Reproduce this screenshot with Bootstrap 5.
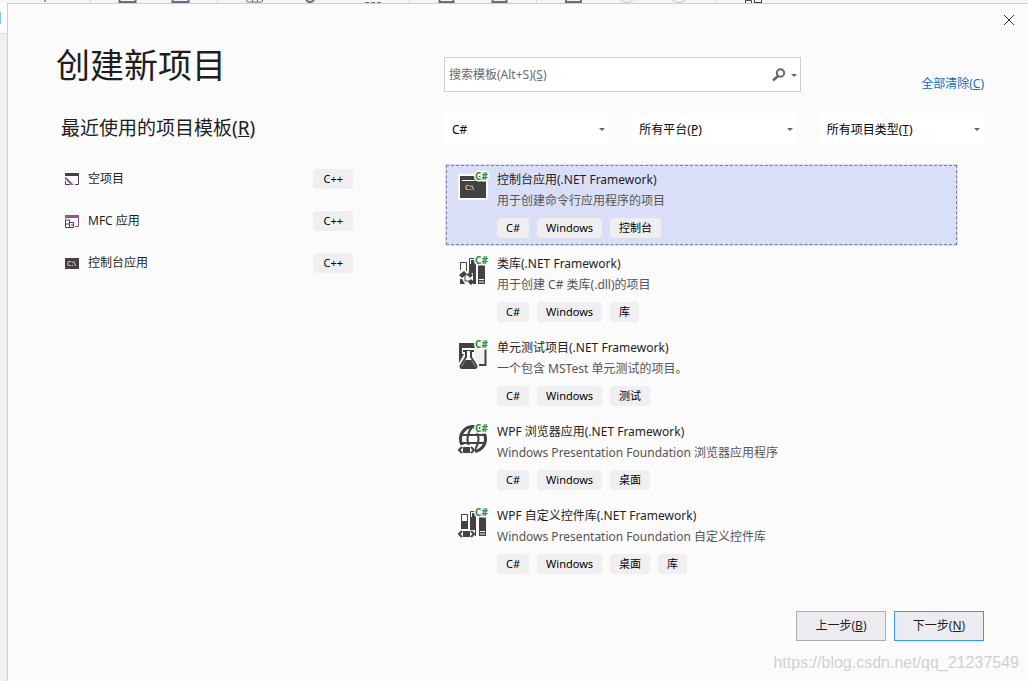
<!DOCTYPE html>
<html lang="zh-CN">
<head>
<meta charset="utf-8">
<meta name="viewport" content="width=device-width, initial-scale=1">
<title>创建新项目</title>
<link href="https://cdn.jsdelivr.net/npm/bootstrap@5.3.0/dist/css/bootstrap.min.css" rel="stylesheet">
<style>
  :root { --ink: #1e1e1e; --line: #cccedb; --chip: #efeff0; }
  body { font-family: "Noto Sans", "Noto Sans CJK SC", sans-serif; font-size: 12px; line-height: 20px; color: var(--ink); background: #fff; }
  .ide-strip { height: 3px; background: #f5f5f6; overflow: hidden; }
  .ide-strip svg { display: block; }
  .ide-edge { width: 7px; background: linear-gradient(#fff 30px, #dcdce0 30px, #dcdce0 31px, #f0f0f0 31px); }
  .ide-edge span { display: block; width: 1px; height: 12px; margin-top: 9px; background: #7fc4ff; }
  .dialog { background: #fbfbfb; border-top: 1px solid var(--line); border-left: 1px solid var(--line); min-width: 0; }
  .dialog-grid { display: grid; grid-template-columns: 297fr 540fr; column-gap: 91px; padding: 41px 44px 0 48px; }
  .close-x { position: absolute; top: 10px; right: 13px; width: 12px; height: 12px; padding: 0; border: 0; background: none; display: flex; }
  h1 { font-size: 34px; line-height: 40px; font-weight: 400; margin: 0 0 29px; }
  h2 { font-size: 19px; line-height: 28px; font-weight: 400; margin: 0 0 16px; padding-left: 5px; }
  .recent a { height: 42px; padding-left: 9px; color: var(--ink); text-decoration: none; gap: 9px; }
  .chip { height: 20px; line-height: 20px; padding: 0 9px; border-radius: 4px; background: var(--chip); color: #000; white-space: nowrap; font-size: 11px; }
  .recent .chip { padding: 0 10px; }
  .search { width: 357px; height: 35px; border: 1px solid var(--line); background: #fff; padding: 0 0 0 4px; }
  .search input { border: 0; outline: 0; padding: 0; min-width: 0; background: none; }
  .search input::placeholder { color: #6b6b6b; opacity: 1; }
  .search button { border: 0; background: none; padding: 0; display: flex; }
  .clear-link { color: #0e70c0; text-decoration: none; line-height: 16px; white-space: nowrap; }
  .right-pane { padding-top: 12px; }
  .filters { display: grid; grid-template-columns: repeat(3, 1fr); gap: 22px; margin-top: 21px; }
  .filters select { appearance: none; width: 100%; height: 32px; border: 0; border-radius: 0; padding: 2px 20px 0 8px; font-size: 12px; color: #000;
    background: #fff url("data:image/svg+xml,%3Csvg xmlns='http://www.w3.org/2000/svg' width='6' height='3'%3E%3Cpath d='M0 0h6L3 3z' fill='%23666'/%3E%3C/svg%3E") no-repeat right 4px top 15px; }
  .templates { margin: 19px 26px 0 1px; }
  .template { display: flex; gap: 7px; padding: 6px 12px 8px 13px; margin-bottom: 2px; color: var(--ink); text-decoration: none; }
  .template.active { background: #dadff8; position: relative; }
  .template.active::after { content: ""; position: absolute; inset: 1px; border: 1px dashed #7a7f9b; }
  .template > svg { flex: none; margin-top: -1px; }
  .template p { margin: 0 0 6px; line-height: 22px; color: #555; }
  .halo { fill: #388a34; font: bold 10px "Noto Sans", sans-serif; paint-order: stroke; stroke: #fbfbfb; stroke-width: 3px; stroke-linejoin: round; }
  .prompt { fill: #fff; font: 7px "Noto Sans", sans-serif; }
  .actions { margin-top: 29px; gap: 8px; }
  .actions button { width: 90px; height: 30px; border: 1px solid #acacac; background: #ececf0; color: var(--ink); padding: 0; font-size: 12px; }
  .actions .next { border-color: #3399ff; }
  .watermark { font: 16px/20px "Liberation Sans", sans-serif; color: #d0d0d0; text-shadow: 1px 1px 0 #fff; margin: 12px 9px 0 0; text-align: right; }
</style>
</head>
<body class="d-flex flex-column min-vh-100">
<div class="ide-strip" aria-hidden="true">
  <svg width="1028" height="3" fill="none" stroke="#6a6d80">
    <path d="M119.500 0v2h16V0M172.500 0v2h16V0M439.500 0v2h14V0M492.500 0v2h14V0M566 0v2h15V0" stroke-width="2"/>
    <path d="M246.500 0v1q0 1 2 1h12q2 0 2-1V0M252.500 0v2M257.500 0v2M365 2.500h4m2 0h4m2 0h4"/>
    <path d="M306 0q4 4 8 0" stroke-width="2"/>
    <path d="M45 0v2" stroke="#444"/>
    <path d="M620 0q7 5 13 0M672 0q7 5 13 0" stroke="#c4c5cc"/>
    <path d="M745.500 3V.5h6V3M754.500 3V0M761.500 3V0M754 2.500h8" stroke="#444"/>
    <path d="M90.500 0v3M217.500 0v3M409.500 0v3M536.500 0v3M716.500 0v3" stroke="#d5d6de"/>
  </svg>
</div>
<div class="d-flex flex-grow-1">
  <div class="ide-edge flex-shrink-0" aria-hidden="true"><span></span></div>
  <main class="dialog flex-grow-1 position-relative">
    <button type="button" class="close-x" aria-label="关闭"><svg width="12" height="12" stroke="#333"><path d="M1 1l10 10M11 1L1 11"/></svg></button>
    <div class="dialog-grid">
      <section>
        <h1>创建新项目</h1>
        <h2>最近使用的项目模板(<u>R</u>)</h2>
        <nav class="recent" aria-label="最近使用的项目模板">
          <a href="#" class="d-flex align-items-center">
            <svg width="14" height="12"><path d="M0 0h14v3H0z" fill="#424242"/><path d="M.5 8v3.500H5M13.500 3v8.500H10" fill="none" stroke="#424242"/><path d="M0 4.500l8 8" stroke="#9b4f96" stroke-width="2"/></svg>
            <span class="flex-grow-1">空项目</span><span class="chip">C++</span></a>
          <a href="#" class="d-flex align-items-center">
            <svg width="14" height="13"><path d="M0 0h14v3H0z" fill="#9b4f96"/><path d="M13.500 3v8.500H10M.5 3v1" fill="none" stroke="#9b4f96"/><path d="M.5 5h4v7.500h-4zM4.500 7.500h4v5h-4M0 9h5M6 10h2" fill="none" stroke="#424242"/></svg>
            <span class="flex-grow-1">MFC 应用</span><span class="chip">C++</span></a>
          <a href="#" class="d-flex align-items-center">
            <svg width="14" height="11"><path d="M0 0h14v11H0z" fill="#424242"/><text class="prompt" x="2" y="8">C:\</text></svg>
            <span class="flex-grow-1">控制台应用</span><span class="chip">C++</span></a>
        </nav>
      </section>
      <section class="right-pane">
        <div class="d-flex justify-content-between align-items-end">
          <div class="search d-flex align-items-center">
            <input type="search" class="flex-grow-1" aria-label="搜索模板" placeholder="搜索模板(Alt+S)(S̲)">
            <button type="button" aria-label="搜索"><svg width="28" height="14"><circle cx="8.500" cy="5" r="3.700" fill="none" stroke="#666" stroke-width="2"/><path d="M6 8l-5 4.500" stroke="#666" stroke-width="2.500"/><path d="M19 6h6l-3 3z" fill="#666"/></svg></button>
          </div>
          <a href="#" class="clear-link">全部清除(<u>C</u>)</a>
        </div>
        <div class="filters">
          <select aria-label="语言"><option>C#</option></select>
          <select aria-label="平台"><option>所有平台(P̲)</option></select>
          <select aria-label="项目类型"><option>所有项目类型(T̲)</option></select>
        </div>
        <div class="templates">
          <a href="#" class="template active" aria-current="true">
            <svg width="32" height="33" viewBox="0 -3 32 33"><path d="M0 2h30v26H0z" fill="#fbfbfb"/><path d="M2 4h26v22H2z" fill="#424242"/><path d="M4 8.500h13" stroke="#fff"/><text class="prompt" x="7" y="18">C:\</text><text class="halo" x="17" y="8">C#</text></svg>
            <div><div>控制台应用(.NET Framework)</div><p>用于创建命令行应用程序的项目</p>
              <div class="d-flex gap-2"><span class="chip">C#</span><span class="chip">Windows</span><span class="chip">控制台</span></div></div></a>
          <a href="#" class="template">
            <svg width="32" height="33" viewBox="0 -3 32 33"><path d="M2.500 14V6.500h6V15M11.500 8V2.500h6" fill="none" stroke="#424242"/><path d="M11 8h2V4h5v24h-3V17h-4zM20 9h7v19h-7z" fill="#424242"/><path d="M21 23.500h5M21 26h5" stroke="#fbfbfb"/><path d="M1 19l5-4 3 3-5 4zM2 23h2l3 5H2zM9 18l3-2 3 3-3 3zM10 26l3-3 3 3-3 3z" fill="#424242"/><path d="M7 19h3M7 20v5h5" fill="none" stroke="#424242"/><text class="halo" x="17" y="8">C#</text></svg>
            <div><div>类库(.NET Framework)</div><p>用于创建 C# 类库(.dll)的项目</p>
              <div class="d-flex gap-2"><span class="chip">C#</span><span class="chip">Windows</span><span class="chip">库</span></div></div></a>
          <a href="#" class="template">
            <svg width="32" height="33" viewBox="0 -3 32 33"><path d="M17 8h10v17H17z" fill="#f1f1f1"/><path d="M1 3h16v5H4v6h2L1 23z" fill="#424242"/><path d="M21 25h6.500V7" fill="none" stroke="#424242" stroke-width="2"/><path d="M5 11h11" stroke="#424242" stroke-width="2"/><path d="M8 11v6L2.500 26q0 2 1.500 2h13q1.500 0 1.500-2L13 17v-6" fill="#fbfbfb" stroke="#424242" stroke-width="2"/><path d="M7.500 20h6l4.500 8H3z" fill="#424242"/><text class="halo" x="17" y="8">C#</text></svg>
            <div><div>单元测试项目(.NET Framework)</div><p>一个包含 MSTest 单元测试的项目。</p>
              <div class="d-flex gap-2"><span class="chip">C#</span><span class="chip">Windows</span><span class="chip">测试</span></div></div></a>
          <a href="#" class="template">
            <svg width="32" height="33" viewBox="0 -3 32 33"><g fill="none" stroke="#424242"><circle cx="15" cy="15" r="12.500" stroke-width="3"/><path d="M3 11h24M3 19h24M15 2q-11 13 0 26M15 2q11 13 0 26" stroke-width="2"/></g><path d="M0 21h17v9H0z" fill="#fbfbfb"/><path d="M5 23h7v6H5z" fill="#424242"/><path d="M4 23l-3 3 3 3M13 23l3 3-3 3" fill="none" stroke="#424242" stroke-width="2"/><text class="halo" x="17" y="8">C#</text></svg>
            <div><div>WPF 浏览器应用(.NET Framework)</div><p>Windows Presentation Foundation 浏览器应用程序</p>
              <div class="d-flex gap-2"><span class="chip">C#</span><span class="chip">Windows</span><span class="chip">桌面</span></div></div></a>
          <a href="#" class="template">
            <svg width="32" height="33" viewBox="0 -3 32 33"><path d="M3.500 14V6.500h6V14M12.500 9V3.500h6" fill="none" stroke="#424242"/><path d="M3 13h7v8H3zM12 9h2V5h4v23h-1v-6h-5zM21 9h7v19h-7z" fill="#424242"/><path d="M22 23.500h5M22 26h5" stroke="#fbfbfb"/><path d="M5 23h7v6H5z" fill="#424242"/><path d="M4 23l-3 3 3 3M13 23l3 3-3 3" fill="none" stroke="#424242" stroke-width="2"/><text class="halo" x="17" y="8">C#</text></svg>
            <div><div>WPF 自定义控件库(.NET Framework)</div><p>Windows Presentation Foundation 自定义控件库</p>
              <div class="d-flex gap-2"><span class="chip">C#</span><span class="chip">Windows</span><span class="chip">桌面</span><span class="chip">库</span></div></div></a>
        </div>
        <div class="actions d-flex justify-content-end">
          <button type="button">上一步(<u>B</u>)</button>
          <button type="button" class="next">下一步(<u>N</u>)</button>
        </div>
      </section>
    </div>
    <div class="watermark">https://blog.csdn.net/qq_21237549</div>
  </main>
</div>
<script src="https://cdn.jsdelivr.net/npm/bootstrap@5.3.0/dist/js/bootstrap.bundle.min.js"></script>
</body>
</html>
